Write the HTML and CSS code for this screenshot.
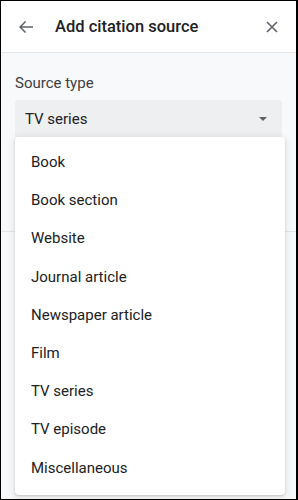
FILE: index.html
```html
<!DOCTYPE html>
<html>
<head>
    <meta charset="UTF-8">
    <title>Add citation source</title>
    <link rel="stylesheet" href="styles.css">
</head>
<body>
    <div class="panel">
        <div class="header">
            <span class="back">
                <svg width="16" height="16" viewBox="0 0 16 16"><path d="M15 7.25H3.9l4.2-4.2L7 2 1 8l6 6 1.05-1.05-4.15-4.2H15z" fill="#5f6368"/></svg>
            </span>
            <span class="title">Add citation source</span>
            <span class="close">
                <svg width="12" height="12" viewBox="0 0 12 12"><path d="M1 1l10 10M11 1L1 11" stroke="#5f6368" stroke-width="1.6"/></svg>
            </span>
        </div>
        <div class="content">
            <div class="label">Source type</div>
            <div class="select">
                <span>TV series</span>
                <span class="caret"></span>
            </div>
        </div>
        <div class="divider"></div>

        <ul class="menu">
            <li>Book</li>
            <li>Book section</li>
            <li>Website</li>
            <li>Journal article</li>
            <li>Newspaper article</li>
            <li>Film</li>
            <li>TV series</li>
            <li>TV episode</li>
            <li>Miscellaneous</li>
        </ul>
    </div>
</body>
</html>
```

FILE: styles.css
```css
*{
    padding: 0;
    margin: 0;
    box-sizing: border-box;
}
body{
    font-family: Roboto, "Liberation Sans", Arial, sans-serif;
    color: #202124;
}
.panel{
    width: 298px;
    height: 500px;
    border: 1px solid #000;
    border-right-width: 2px;
    background: #f8f9fa;
    position: relative;
    overflow: hidden;
}
.header{
    height: 52px;
    background: #fff;
    border-bottom: 1px solid #e3e5e8;
    display: flex;
    align-items: center;
    padding: 0 18px 0 17px;
}
.back{
    display: flex;
    width: 16px;
}
.title{
    margin-left: 21px;
    font-size: 16.5px;
    font-weight: 500;
    flex: 1;
    padding-bottom: 1px;
}
.close{
    display: flex;
}
.content{
    padding: 20px 14px 0;
    height: 178px;
}
.label{
    font-size: 15px;
    color: #3c4043;
    line-height: 20px;
}
.select{
    margin-top: 7px;
    height: 37px;
    background: #eeeff0;
    border-radius: 4px 4px 0 0;
    display: flex;
    align-items: center;
    justify-content: space-between;
    padding: 0 15px 0 10px;
    font-size: 15px;
}
.caret{
    width: 0;
    height: 0;
    border-left: 4px solid transparent;
    border-right: 4px solid transparent;
    border-top: 4px solid #5f6368;
}
.divider{
    border-top: 1px solid #e3e5e8;
}
.menu{
    list-style: none;
    position: absolute;
    left: 14px;
    top: 136px;
    width: 270px;
    padding: 6px 0 8px;
    background: #fff;
    border-radius: 4px;
    box-shadow: 0 1px 2px rgba(60,64,67,.2), 0 2px 6px 2px rgba(60,64,67,.1);
}
.menu li{
    height: 38.2px;
    line-height: 38.2px;
    padding-left: 16px;
    font-size: 15px;
    color: #202124;
}
```
